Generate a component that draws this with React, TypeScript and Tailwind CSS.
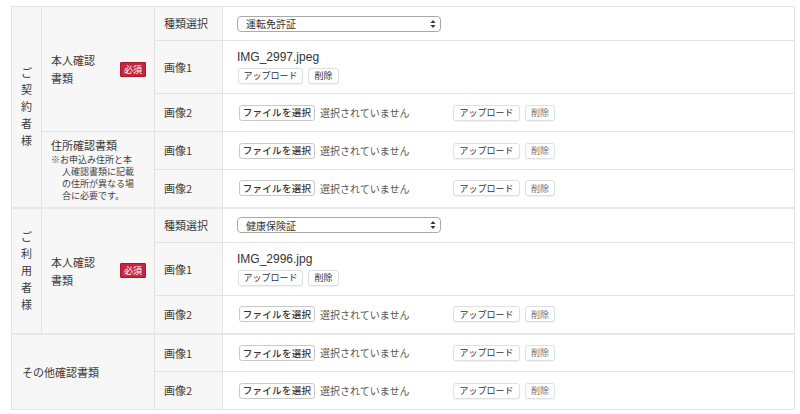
import React from "react";

const jp = { fontFamily: '"Noto Sans CJK JP", "Noto Sans", sans-serif' };

const Badge = () => (
  <span className="inline-block bg-[#c4283c] text-white text-[9px] leading-[13px] px-[3px] rounded-[1px] border border-[#a8182c]">必須</span>
);

const Btn = ({ children, w, muted }: { children: React.ReactNode; w: string; muted?: boolean }) => (
  <span
    className={`inline-flex items-center justify-center h-[16px] ${w} bg-white border border-[#e0e0e0] rounded-[3px] shadow-[0_1px_1px_rgba(0,0,0,0.06)] text-[9px] ${muted ? "text-[#6f6f6f]" : "text-[#333]"}`}
  >
    {children}
  </span>
);

const SelectBox = ({ value }: { value: string }) => (
  <div className="flex items-center justify-between w-[204px] h-[16px] border border-[#a9a9a9] rounded-[4px] bg-white pl-[8px] pr-[4px] text-[10px] text-[#333]">
    <span>{value}</span>
    <svg width="6" height="10" viewBox="0 0 6 10">
      <path d="M3 1 L5.5 4 H0.5 Z" fill="#333" />
      <path d="M3 9 L5.5 6 H0.5 Z" fill="#333" />
    </svg>
  </div>
);

const FileRow = () => (
  <div className="flex items-center">
    <div className="flex items-center w-[216px] pl-[2px]">
      <span className="inline-flex items-center justify-center h-[16px] w-[76px] bg-white border border-[#c9c9c9] rounded-[3px] text-[9.5px] tracking-[0.3px] text-[#333] font-medium">ファイルを選択</span>
      <span className="ml-[5px] text-[10px] text-[#555]">選択されていません</span>
    </div>
    <Btn w="w-[67px]">アップロード</Btn>
    <span className="w-[5px]" />
    <Btn w="w-[30px]" muted>削除</Btn>
  </div>
);

const Uploaded = ({ name }: { name: string }) => (
  <div className="flex flex-col">
    <span className="text-[12px] leading-[15px] text-[#333] mb-[3px]" style={{ fontFamily: '"Liberation Sans", Arial, sans-serif' }}>{name}</span>
    <div className="flex items-center gap-[5px] pl-[1px]">
      <Btn w="w-[65px]">アップロード</Btn>
      <Btn w="w-[31px]">削除</Btn>
    </div>
  </div>
);

const lbl = "bg-[#f7f7f7] border border-[#e3e3e3] text-[11px] text-[#3a3a3a] align-middle";
const val = "bg-white border border-[#e3e3e3] pl-[14px] align-middle";

const Vertical = ({ text }: { text: string }) => (
  <div className="flex flex-col items-center leading-[17px]">
    {text.split("").map((c, i) => (
      <span key={i}>{c}</span>
    ))}
  </div>
);

const Honnin = () => (
  <div className="flex items-center justify-between pl-[9px] pr-[8px]">
    <span className="leading-[18px]">本人確認<br />書類</span>
    <Badge />
  </div>
);

export default function App() {
  return (
    <div className="bg-white w-[800px] h-[414px] pt-[6px] pl-[11px]" style={jp}>
      <table className="border-collapse w-[784px] table-fixed border border-[#dcdcdc]">
        <colgroup>
          <col className="w-[30px]" />
          <col className="w-[113px]" />
          <col className="w-[68px]" />
          <col />
        </colgroup>
        <tbody>
          <tr className="h-[34px]">
            <td rowSpan={5} className={lbl}><Vertical text="ご契約者様" /></td>
            <td rowSpan={3} className={lbl}><Honnin /></td>
            <td className={`${lbl} pl-[9px]`}>種類選択</td>
            <td className={val}><SelectBox value="運転免許証" /></td>
          </tr>
          <tr className="h-[53px]">
            <td className={`${lbl} pl-[9px]`}>画像1</td>
            <td className={val}><Uploaded name="IMG_2997.jpeg" /></td>
          </tr>
          <tr className="h-[38px]">
            <td className={`${lbl} pl-[9px]`}>画像2</td>
            <td className={val}><FileRow /></td>
          </tr>
          <tr className="h-[38px]">
            <td rowSpan={2} className={`${lbl} pl-[9px]`}>
              <div className="leading-[16px]">住所確認書類</div>
              <div className="text-[9px] leading-[12px] pl-[11px] -indent-[11px] text-[#444] mt-[1px]">
                ※お申込み住所と本<br />人確認書類に記載<br />の住所が異なる場<br />合に必要です。
              </div>
            </td>
            <td className={`${lbl} pl-[9px]`}>画像1</td>
            <td className={val}><FileRow /></td>
          </tr>
          <tr className="h-[38px]">
            <td className={`${lbl} pl-[9px]`}>画像2</td>
            <td className={val}><FileRow /></td>
          </tr>
          <tr className="h-[35px] border-t-2 border-[#e8e8e8]">
            <td rowSpan={3} className={lbl}><Vertical text="ご利用者様" /></td>
            <td rowSpan={3} className={lbl}><Honnin /></td>
            <td className={`${lbl} pl-[9px]`}>種類選択</td>
            <td className={val}><SelectBox value="健康保険証" /></td>
          </tr>
          <tr className="h-[53px]">
            <td className={`${lbl} pl-[9px]`}>画像1</td>
            <td className={val}><Uploaded name="IMG_2996.jpg" /></td>
          </tr>
          <tr className="h-[38px]">
            <td className={`${lbl} pl-[9px]`}>画像2</td>
            <td className={val}><FileRow /></td>
          </tr>
          <tr className="h-[38px] border-t-2 border-[#e8e8e8]">
            <td rowSpan={2} colSpan={2} className={`${lbl} pl-[10px]`}>その他確認書類</td>
            <td className={`${lbl} pl-[9px]`}>画像1</td>
            <td className={val}><FileRow /></td>
          </tr>
          <tr className="h-[38px]">
            <td className={`${lbl} pl-[9px]`}>画像2</td>
            <td className={val}><FileRow /></td>
          </tr>
        </tbody>
      </table>
    </div>
  );
}
